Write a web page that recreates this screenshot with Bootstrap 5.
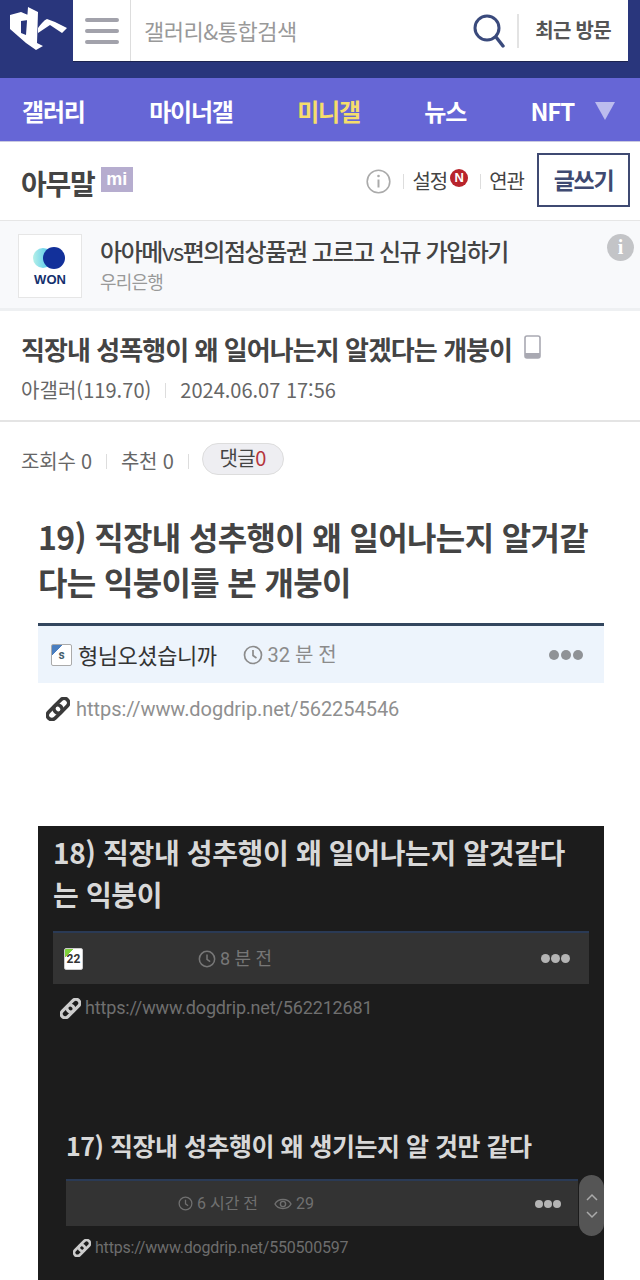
<!DOCTYPE html>
<html lang="ko">
<head>
<meta charset="UTF-8">
<title>아무말 미니갤</title>
<link href="https://cdn.jsdelivr.net/npm/bootstrap@5.3.3/dist/css/bootstrap.min.css" rel="stylesheet">
<script src="https://cdn.jsdelivr.net/npm/bootstrap@5.3.3/dist/js/bootstrap.bundle.min.js"></script>
<style>
    body { font-family: "Noto Sans CJK KR", "Noto Sans", sans-serif; color: #444; width: 640px; height: 1280px; overflow: hidden; background: #fff; }
    a { color: inherit; text-decoration: none; }
    .top-head { height: 78px; background: #29367c; }
    .logo-box { width: 73px; height: 61px; }
    .search-box { width: 555px; height: 61px; background: #fff; box-shadow: 0 1px 0 #1c2350; }
    .menu-btn { width: 58px; height: 61px; border-right: 1px solid #ddd; }
    .search-ph { font-size: 22px; letter-spacing: -.5px; color: #999; padding-left: 13px; }
    .search-ic { margin-right: 12px; }
    .recent { font-size: 20px; font-weight: 700; color: #555; letter-spacing: -.7px; border-left: 2px solid #e3e3e3; height: 34px; line-height: 32px; padding: 0 17px 0 16px; }
    .gnb { height: 64px; background: #6666d6; border-bottom: 1px solid #c9c9e0; padding: 3px 25px 0 22px; }
    .gnb a { color: #fff; font-size: 24px; font-weight: 700; letter-spacing: -1.2px; line-height: 1; }
    .gnb a.on { color: #f5dd6b; }
    .gnb-arrow { width: 0; height: 0; border-left: 10px solid transparent; border-right: 10px solid transparent; border-top: 18px solid #bcbcee; }
    .nft-wrap { gap: 21px; }
    .gall-head { height: 79px; padding: 0 10px 0 21px; border-bottom: 1px solid #e6e6e6; }
    .gall-name { font-size: 28px; font-weight: 700; letter-spacing: -1.2px; color: #444; padding-top: 3px; }
    .mi-mark { background: #b6adcf; color: #fff; font-size: 18px; font-weight: 700; width: 32px; height: 25px; line-height: 24px; text-align: center; margin: 0 0 3px 6px; font-family: "Liberation Sans", sans-serif; }
    .head-link { font-size: 20px; letter-spacing: -1px; color: #444; }
    .vbar { width: 1px; height: 15px; background: #ddd; }
    .n-mark { width: 18px; height: 18px; border-radius: 50%; background: #b8242c; color: #fff; font-size: 13px; font-weight: 700; line-height: 18px; text-align: center; font-family: "Liberation Sans", sans-serif; margin: 0 4px 6px -5px; }
    .write-btn { width: 93px; height: 54px; border: 2px solid #3f4a72; color: #3f4a72; font-size: 23px; font-weight: 700; letter-spacing: -1.3px; line-height: 48px; text-align: center; margin: 0 0 2px 13px; }
    .ad-box { height: 90px; background: #f8f9fb; border-bottom: 3px solid #eef0f2; padding: 13px 6px 0 18px; }
    .ad-logo { width: 64px; height: 64px; background: #fff; border: 1px solid #e6e6e6; }
    .ad-won { font-family: "Liberation Sans", sans-serif; font-weight: 700; font-size: 13px; color: #14306e; line-height: 1; margin-top: 4px; }
    .ad-text { margin-left: 18px; }
    .ad-title { font-size: 24px; font-weight: 500; letter-spacing: -1.45px; color: #444; line-height: 34px; }
    .ad-title span { font-weight: 400; }
    .ad-sub { font-size: 18px; letter-spacing: -.8px; color: #999; line-height: 24px; margin-top: 1px; }
    .ad-info { width: 27px; height: 27px; border-radius: 50%; background: #c3c4c7; color: #fff; font-family: "Liberation Serif", serif; font-weight: 700; font-size: 20px; line-height: 27px; text-align: center; }
    .post-head { height: 111px; border-bottom: 2px solid #e4e4e4; padding: 20px 0 0 21px; }
    .post-title { font-size: 26px; font-weight: 700; letter-spacing: -.95px; color: #444; line-height: 36px; margin: 0; }
    .phone-ic { margin: 0 0 4px 12px; }
    .post-info { font-size: 20px; color: #666; letter-spacing: 0; line-height: 30px; margin-top: 8px; }
    .post-name { letter-spacing: .05px; }
    .info-bar { margin: 0 14px; }
    .stats-row { padding: 24px 0 0 21px; font-size: 20px; color: #666; letter-spacing: -.2px; height: 92px; }
    .stats-bar { margin: 8px 14px 0; }
    .stats-bar.last-bar { margin-right: 13px; }
    .reply-pill { background: #eeeef2; border: 1px solid #ddd; border-radius: 16px; width: 82px; height: 32px; font-size: 20px; line-height: 28px; text-align: center; color: #444; letter-spacing: -.5px; margin-top: -3px; }
    .reply-pill b { color: #b5343c; font-weight: 400; }
    .capture { margin: 0 36px 0 38px; font-family: Roboto, "Noto Sans CJK KR", sans-serif; position: relative; }
    .cap-title { font-family: "Noto Sans CJK KR", sans-serif; font-size: 32px; font-weight: 700; line-height: 45px; letter-spacing: -.65px; color: #444; margin: 0 0 19px; }
    .cap-bar { height: 60px; background: #edf4fc; border-top: 3px solid #33465e; padding: 0 21px 0 13px; }
    .cap-nick { font-family: "Noto Sans CJK KR", sans-serif; font-size: 22px; letter-spacing: -.45px; color: #333; margin-left: 6px; }
    .cap-time { font-size: 20px; color: #8b8b8b; margin-left: 26px; }
    .cap-time svg { margin-right: 5px; }
    .cap-dots { gap: 2px; }
    .cap-dots i { width: 10px; height: 10px; border-radius: 50%; background: #8f9296; display: block; }
    .cap-link { font-size: 20px; color: #8f8f8f; padding: 9px 0 0 8px; line-height: 34px; letter-spacing: -.05px; gap: 6px; }
    .lvl-badge { width: 21px; height: 22px; border: 1px solid #aaa; border-radius: 2px; background: linear-gradient(135deg, #4a7ec0 28%, #fff 28%); font-size: 12px; font-weight: 700; line-height: 20px; text-align: center; color: #44606e; }
    .lvl-green { width: 19px; border-color: #ccc; background: linear-gradient(135deg, #7fd23c 24%, #fff 24%); color: #333; }
    .dark-shot { height: 480px; background: #1c1c1c; margin-top: 100px; padding: 5px 15px 0 15px; overflow: hidden; }
    .dark-title { font-family: "Noto Sans CJK KR", sans-serif; font-weight: 700; font-size: 28px; line-height: 42px; letter-spacing: -.35px; color: #d8d8d8; margin: 0 0 16px; padding-right: 20px; }
    .dark-bar { height: 53px; background: #333; border-top: 2px solid #2a3a55; padding: 0 19px 0 11px; }
    .dark-clock { margin-left: 115px; }
    .dark-time { font-size: 18px; color: #777; letter-spacing: 0; }
    .dark-dots { gap: 1px; }
    .dark-dots i { width: 9px; height: 9px; background: #b4b4b4; }
    .dark-link { font-size: 18px; color: #6f6f6f; line-height: 30px; padding: 9px 0 0 7px; letter-spacing: -.15px; }
    .dark-inner { margin: 104px 11px 0 13px; }
    .dark-title2 { font-family: "Noto Sans CJK KR", sans-serif; font-weight: 700; font-size: 25px; line-height: 36px; letter-spacing: -.5px; color: #d8d8d8; margin: 0 0 16px; }
    .dark-bar2 { height: 47px; background: #333; border-top: 2px solid #2a3a55; padding: 0 17px 0 112px; }
    .dark-time2 { font-size: 16px; color: #707070; }
    .small-dots i { width: 8px; height: 8px; }
    .dark-link2 { font-size: 16px; color: #6d6d6d; line-height: 30px; padding: 7px 0 0 7px; letter-spacing: -.2px; }
    .scroll-pill { position: absolute; right: 0; top: 661px; width: 25px; height: 61px; background: #555; border-radius: 13px; }
</style>
</head>
<body>

<header class="top-head d-flex align-items-start">
    <a href="#" class="logo-box d-flex">
        <svg width="73" height="61" viewBox="0 0 73 61" fill="#fff">
            <path d="M28 7l10 5-1 31 6 3-7 4-10-7-16-14V15l11-3 7 3v5l-7 1v12l5 2z"/>
            <path d="M38 28c3-4 6-8 9-9l8 3 12 6-5 5-12-8-12 8z"/>
        </svg>
    </a>
    <div class="search-box d-flex align-items-center">
        <div class="menu-btn d-flex flex-column justify-content-center align-items-center gap-2">
            <svg width="34" height="28" viewBox="0 0 34 28"><path d="M2 3h30M2 14h30M2 25h30" stroke="#a2a2ab" stroke-width="4" stroke-linecap="round"/></svg>
        </div>
        <div class="search-ph flex-grow-1">갤러리&amp;통합검색</div>
        <svg class="search-ic" width="32" height="34" viewBox="0 0 32 34"><circle cx="14" cy="14" r="12" fill="none" stroke="#3a4a7c" stroke-width="3"/><path d="M23 23l7 9" stroke="#3a4a7c" stroke-width="3.4" stroke-linecap="round"/></svg>
        <div class="recent">최근 방문</div>
    </div>
</header>

<nav class="gnb d-flex align-items-center justify-content-between">
    <a href="#">갤러리</a>
    <a href="#">마이너갤</a>
    <a href="#" class="on">미니갤</a>
    <a href="#">뉴스</a>
    <div class="nft-wrap d-flex align-items-center">
        <a href="#">NFT</a>
        <span class="gnb-arrow"></span>
    </div>
</nav>

<div class="gall-head d-flex align-items-center">
    <div class="gall-name">아무말</div>
    <div class="mi-mark">mi</div>
    <div class="ms-auto d-flex align-items-center gap-2">
        <svg width="25" height="25" viewBox="0 0 25 25" class="me-1"><circle cx="12.5" cy="12.5" r="11.3" fill="none" stroke="#aaa" stroke-width="1.6"/><path d="M12.5 10.5v8" stroke="#aaa" stroke-width="2"/><circle cx="12.5" cy="7" r="1.3" fill="#aaa"/></svg>
        <span class="vbar"></span>
        <a href="#" class="head-link">설정</a>
        <span class="n-mark">N</span>
        <span class="vbar"></span>
        <a href="#" class="head-link">연관</a>
    </div>
    <a href="#" class="write-btn">글쓰기</a>
</div>

<div class="ad-box d-flex">
    <div class="ad-logo d-flex flex-column align-items-center justify-content-center flex-shrink-0">
        <svg width="36" height="22" viewBox="0 0 36 22"><defs><linearGradient id="wonGrad" x1="0" x2="1"><stop offset="0" stop-color="#b5f0e8"/><stop offset="1" stop-color="#3fc0ee"/></linearGradient></defs><circle cx="11" cy="11" r="10" fill="url(#wonGrad)"/><circle cx="22" cy="11" r="11" fill="#12309a"/></svg>
        <div class="ad-won">WON</div>
    </div>
    <div class="ad-text flex-grow-1">
        <div class="ad-title">아아메<span>vs</span>편의점상품권 고르고 신규 가입하기</div>
        <div class="ad-sub">우리은행</div>
    </div>
    <div class="ad-info flex-shrink-0">i</div>
</div>

<section class="post-head">
    <h1 class="post-title d-flex align-items-center">직장내 성폭행이 왜 일어나는지 알겠다는 개붕이
        <svg class="phone-ic" width="17" height="24" viewBox="0 0 17 24"><rect x="1" y="1" width="15" height="22" rx="2" fill="#fff" stroke="#a9a9b2" stroke-width="1.6"/><path d="M1 18h15v4a1 1 0 0 1-1 1H2a1 1 0 0 1-1-1z" fill="#a9a9b2"/></svg>
    </h1>
    <div class="post-info d-flex align-items-center">
        <span class="post-name">아갤러(119.70)</span>
        <span class="vbar info-bar"></span>
        <span>2024.06.07 17:56</span>
    </div>
</section>

<div class="stats-row d-flex align-items-start">
    <span>조회수 0</span>
    <span class="vbar stats-bar"></span>
    <span>추천 0</span>
    <span class="vbar stats-bar last-bar"></span>
    <span class="reply-pill">댓글<b>0</b></span>
</div>

<main class="capture">
    <h2 class="cap-title">19) 직장내 성추행이 왜 일어나는지 알거같다는 익붕이를 본 개붕이</h2>
    <div class="cap-bar d-flex align-items-center">
        <span class="lvl-badge">s</span>
        <span class="cap-nick">형님오셨습니까</span>
        <span class="cap-time d-flex align-items-center">
            <svg width="20" height="20" viewBox="0 0 20 20"><circle cx="10" cy="10" r="8.5" fill="none" stroke="#8b8b8b" stroke-width="1.7"/><path d="M10 5v5.5l3.5 2.5" fill="none" stroke="#8b8b8b" stroke-width="1.7"/></svg>32 분 전
        </span>
        <span class="cap-dots d-flex ms-auto"><i></i><i></i><i></i></span>
    </div>
    <div class="cap-link d-flex align-items-center">
        <svg width="24" height="24" viewBox="0 0 24 24"><g fill="none" stroke="#3a3a3a" stroke-width="3.6"><rect x=".2" y="10.8" width="17" height="9" rx="4.5" transform="rotate(-45 8.7 15.3)"/><rect x="6.8" y="4.2" width="17" height="9" rx="4.5" transform="rotate(-45 15.3 8.7)"/></g></svg>
        <span>https://www.dogdrip.net/562254546</span>
    </div>

    <div class="dark-shot">
        <h2 class="dark-title">18) 직장내 성추행이 왜 일어나는지 알것같다는 익붕이</h2>
        <div class="dark-bar d-flex align-items-center">
            <span class="lvl-badge lvl-green">22</span>
            <span class="dark-time dark-clock d-flex align-items-center">
                <svg class="me-1" width="18" height="18" viewBox="0 0 20 20"><circle cx="10" cy="10" r="8.5" fill="none" stroke="#777" stroke-width="1.7"/><path d="M10 5v5.5l3.5 2.5" fill="none" stroke="#777" stroke-width="1.7"/></svg>8 분 전
            </span>
            <span class="cap-dots dark-dots d-flex ms-auto"><i></i><i></i><i></i></span>
        </div>
        <div class="dark-link d-flex align-items-center gap-1">
            <svg width="21" height="21" viewBox="0 0 24 24"><g fill="none" stroke="#ccc" stroke-width="3.6"><rect x=".2" y="10.8" width="17" height="9" rx="4.5" transform="rotate(-45 8.7 15.3)"/><rect x="6.8" y="4.2" width="17" height="9" rx="4.5" transform="rotate(-45 15.3 8.7)"/></g></svg>
            <span>https://www.dogdrip.net/562212681</span>
        </div>
        <div class="dark-inner">
            <h3 class="dark-title2">17) 직장내 성추행이 왜 생기는지 알 것만 같다</h3>
            <div class="dark-bar2 d-flex align-items-center">
                <span class="dark-time2 d-flex align-items-center">
                    <svg class="me-1" width="15" height="15" viewBox="0 0 20 20"><circle cx="10" cy="10" r="8.5" fill="none" stroke="#707070" stroke-width="1.7"/><path d="M10 5v5.5l3.5 2.5" fill="none" stroke="#707070" stroke-width="1.7"/></svg>6 시간 전
                </span>
                <span class="dark-time2 d-flex align-items-center ms-3">
                    <svg class="me-1" width="18" height="14" viewBox="0 0 18 14"><path d="M1 7c3-6 13-6 16 0-3 6-13 6-16 0z" fill="none" stroke="#707070" stroke-width="1.4"/><circle cx="9" cy="7" r="2.6" fill="none" stroke="#707070" stroke-width="1.4"/></svg>29
                </span>
                <span class="cap-dots dark-dots small-dots d-flex ms-auto"><i></i><i></i><i></i></span>
            </div>
            <div class="dark-link2 d-flex align-items-center gap-1">
                <svg width="18" height="18" viewBox="0 0 24 24"><g fill="none" stroke="#ccc" stroke-width="3.6"><rect x=".2" y="10.8" width="17" height="9" rx="4.5" transform="rotate(-45 8.7 15.3)"/><rect x="6.8" y="4.2" width="17" height="9" rx="4.5" transform="rotate(-45 15.3 8.7)"/></g></svg>
                <span>https://www.dogdrip.net/550500597</span>
            </div>
        </div>
    </div>
    <div class="scroll-pill d-flex flex-column align-items-center justify-content-center gap-2">
        <svg width="14" height="9" viewBox="0 0 14 9"><path d="M2 7l5-5 5 5" fill="none" stroke="#aaa" stroke-width="1.5"/></svg>
        <svg width="14" height="9" viewBox="0 0 14 9"><path d="M2 2l5 5 5-5" fill="none" stroke="#aaa" stroke-width="1.5"/></svg>
    </div>
</main>

</body>
</html>
